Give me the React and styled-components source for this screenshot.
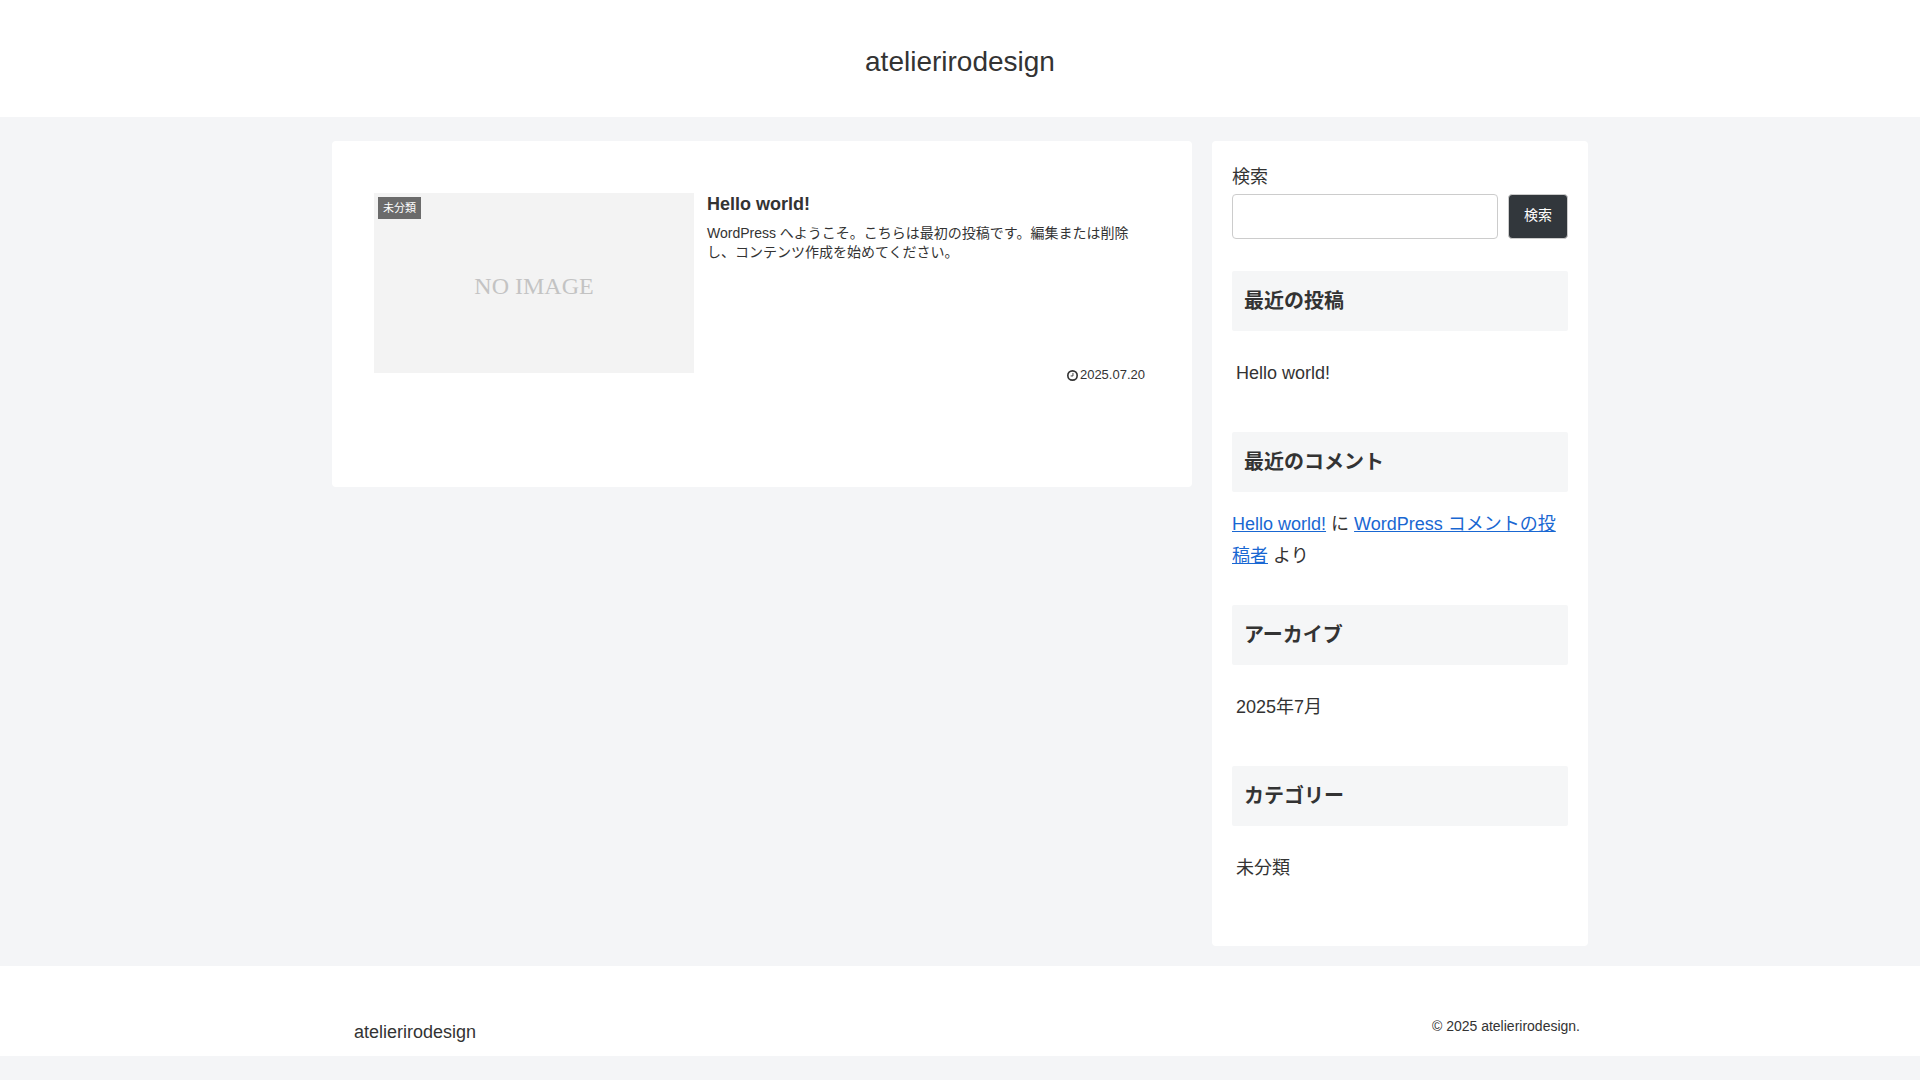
import React, { useState } from "react";
import styled, { createGlobalStyle } from "styled-components";

const GlobalStyle = createGlobalStyle`
  * {
    box-sizing: border-box;
  }
  body {
    margin: 0;
    background-color: #f4f5f7;
    color: #333;
    font-family: "Liberation Sans", "Noto Sans CJK JP", sans-serif;
    font-size: 18px;
    line-height: 32px;
  }
  a {
    color: #1967d2;
  }
`;

const Header = styled.header`
  display: flex;
  justify-content: center;
  padding: 42px 20px 35px;
  background-color: #fff;
`;

const SiteName = styled.h1`
  margin: 0;
  font-size: 28px;
  font-weight: 400;
  line-height: 40px;
`;

const PlainLink = styled.a`
  color: inherit;
  text-decoration: none;
`;

const Content = styled.div`
  display: flex;
  align-items: flex-start;
  gap: 20px;
  max-width: 1256px;
  margin: 24px auto 20px;
`;

const Main = styled.main`
  flex: 1;
  min-width: 0;
  padding: 52px 42px 104px;
  background-color: #fff;
  border-radius: 4px;
`;

const Card = styled.a`
  display: flex;
  gap: 13px;
  color: inherit;
  text-decoration: none;
`;

const Thumb = styled.div`
  position: relative;
  display: flex;
  align-items: center;
  justify-content: center;
  flex: none;
  width: 320px;
  height: 180px;
  padding-top: 6px;
  background-color: #f3f3f3;
  color: #c3c3c3;
  font-family: "Liberation Serif", serif;
  font-size: 24px;
`;

const CatLabel = styled.span`
  position: absolute;
  top: 4px;
  left: 4px;
  padding: 0 5px;
  background-color: #6b6b6b;
  color: #fff;
  font-family: "Liberation Sans", "Noto Sans CJK JP", sans-serif;
  font-size: 11px;
  line-height: 22px;
`;

const CardBody = styled.div`
  display: flex;
  flex-direction: column;
  flex: 1;
  min-width: 0;
  min-height: 190px;
`;

const CardTitle = styled.h2`
  margin: 0 0 9px;
  font-size: 18px;
  line-height: 22px;
`;

const Snippet = styled.p`
  margin: 0;
  font-size: 14px;
  line-height: 19px;
`;

const PostDate = styled.span`
  display: flex;
  align-items: center;
  align-self: flex-end;
  gap: 2px;
  margin-top: auto;
  padding-right: 5px;
  font-size: 13px;
  line-height: 16px;
`;

const ClockSvg = styled.svg`
  width: 11px;
  height: 11px;
  fill: none;
  stroke: currentColor;
`;

const Sidebar = styled.aside`
  flex: none;
  width: 376px;
  padding: 20px 20px 19px;
  background-color: #fff;
  border-radius: 4px;
`;

const SearchForm = styled.form`
  margin-bottom: 32px;
`;

const SearchLabel = styled.label`
  display: block;
  padding-bottom: 1px;
`;

const SearchRow = styled.div`
  display: flex;
  gap: 10px;
`;

const SearchInput = styled.input`
  flex: 1;
  min-width: 0;
  height: 45px;
  padding: 10px;
  border: 1px solid #ccc;
  border-radius: 4px;
  background-color: #fff;
  font: inherit;
`;

const SearchButton = styled.button`
  width: 60px;
  padding: 0 0 5px;
  border: 1px solid #ccc;
  border-radius: 4px;
  background-color: #32373c;
  color: #fff;
  font-family: inherit;
  font-size: 14px;
  cursor: pointer;
`;

const Widget = styled.section`
  margin-bottom: 33px;
`;

const WidgetTitle = styled.h2`
  margin: 0 0 16px;
  padding: 12px;
  border-radius: 2px;
  background-color: #f5f6f7;
  font-size: 20px;
  line-height: 36px;
`;

const WidgetList = styled.ul`
  margin: 0;
  padding: 10px 4px;
  list-style: none;
`;

const Comments = styled.p`
  margin: 0;
`;

const Footer = styled.footer`
  padding: 44px 0 8px;
  background-color: #fff;
`;

const FooterInner = styled.div`
  display: flex;
  align-items: flex-start;
  justify-content: space-between;
  max-width: 1256px;
  margin: 0 auto;
  padding: 0 8px 0 22px;
`;

const FooterName = styled.div`
  padding-top: 6px;
`;

const Copyright = styled.div`
  font-size: 14px;
`;

const ClockIcon = () => (
  <ClockSvg viewBox="0 0 12 12" aria-hidden="true">
    <circle cx="6" cy="6" r="5.1" strokeWidth="1.8" />
    <path d="M6.5 3.2V6.5H4" strokeWidth="1" />
  </ClockSvg>
);

const ListWidget = ({ title, items }) => (
  <Widget>
    <WidgetTitle>{title}</WidgetTitle>
    <WidgetList>
      {items.map((item) => (
        <li key={item}>
          <PlainLink href="#">{item}</PlainLink>
        </li>
      ))}
    </WidgetList>
  </Widget>
);

const App = () => {
  const [query, setQuery] = useState("");

  return (
    <>
      <GlobalStyle />
      <Header>
        <SiteName>
          <PlainLink href="#">atelierirodesign</PlainLink>
        </SiteName>
      </Header>

      <Content>
        <Main>
          <Card href="#">
            <Thumb>
              NO IMAGE
              <CatLabel>未分類</CatLabel>
            </Thumb>
            <CardBody>
              <CardTitle>Hello world!</CardTitle>
              <Snippet>
                WordPress へようこそ。こちらは最初の投稿です。編集または削除し、コンテンツ作成を始めてください。
              </Snippet>
              <PostDate>
                <ClockIcon />
                2025.07.20
              </PostDate>
            </CardBody>
          </Card>
        </Main>

        <Sidebar>
          <SearchForm onSubmit={(e) => e.preventDefault()}>
            <SearchLabel htmlFor="search">検索</SearchLabel>
            <SearchRow>
              <SearchInput
                id="search"
                type="search"
                value={query}
                onChange={(e) => setQuery(e.target.value)}
              />
              <SearchButton type="submit">検索</SearchButton>
            </SearchRow>
          </SearchForm>

          <ListWidget title="最近の投稿" items={["Hello world!"]} />
          <Widget>
            <WidgetTitle>最近のコメント</WidgetTitle>
            <Comments>
              <a href="#">Hello world!</a> に <a href="#">WordPress コメントの投稿者</a> より
            </Comments>
          </Widget>
          <ListWidget title="アーカイブ" items={["2025年7月"]} />
          <ListWidget title="カテゴリー" items={["未分類"]} />
        </Sidebar>
      </Content>

      <Footer>
        <FooterInner>
          <FooterName>
            <PlainLink href="#">atelierirodesign</PlainLink>
          </FooterName>
          <Copyright>© 2025 atelierirodesign.</Copyright>
        </FooterInner>
      </Footer>
    </>
  );
};

export default App;
